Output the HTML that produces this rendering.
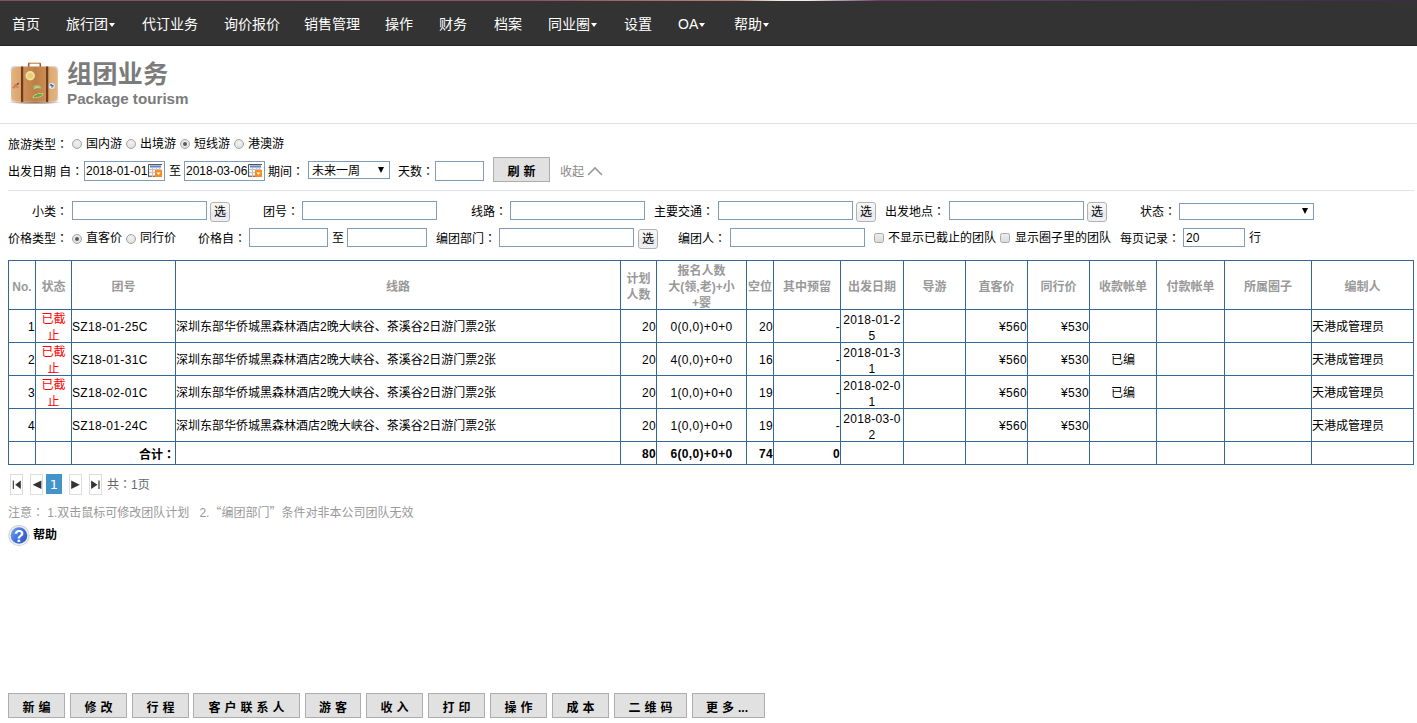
<!DOCTYPE html>
<html lang="zh-CN">
<head>
<meta charset="utf-8">
<title>组团业务</title>
<style>
*{box-sizing:border-box;}
html,body{margin:0;padding:0;background:#fff;}
body{width:1417px;height:723px;position:relative;overflow:hidden;font-family:"Liberation Sans","Noto Sans CJK SC",sans-serif;font-size:12px;line-height:16px;color:#000;}
.abs{position:absolute;white-space:nowrap;}
/* nav */
#topstrip{position:absolute;left:0;top:0;width:1417px;height:1px;background:linear-gradient(to right,#80505f 0,#8a5565 38%,#b58674 52%,#f4ece8 55%,#f4ece8 57%,#6d3d6c 62%,#3f294e 100%);}
#nav{position:absolute;left:0;top:1px;width:1417px;height:45px;background:#333;border-bottom:1px solid #252525;}
#nav a{position:absolute;top:1px;height:44px;line-height:45px;font-size:14px;color:#fff;text-decoration:none;white-space:nowrap;}
#nav .caret{display:inline-block;width:0;height:0;border-left:3.500px solid transparent;border-right:3.500px solid transparent;border-top:4px solid #fff;vertical-align:middle;margin-left:1px;position:relative;top:0px;}
/* header */
#h1{left:67px;top:59px;font-size:25.300px;line-height:30px;font-weight:bold;color:#7b7b7b;}
#h2{left:67px;top:90px;font-size:15.200px;line-height:18px;font-weight:bold;color:#7b7b7b;}
.hr{position:absolute;height:1px;background:#dde2e9;}
/* form */
.lbl{position:absolute;white-space:nowrap;font-size:12px;line-height:16px;height:16px;}
.inp{position:absolute;border:1px solid #7f9db9;background:#fff;font-size:12px;line-height:16px;padding:1px 2px;white-space:nowrap;overflow:hidden;}
.sel{position:absolute;border:1px solid #7f9db9;background:#fff;font-size:12px;line-height:16px;padding:1px 3px 0;white-space:nowrap;}
.sel i{position:absolute;right:5px;top:5px;width:0;height:0;border-left:3.200px solid transparent;border-right:3.200px solid transparent;border-top:6px solid #000;}
.pick{position:absolute;width:20px;height:20px;border:1px solid #b2b2b2;border-radius:3px;background:linear-gradient(#f7f7f7 0%,#f1f1f1 48%,#e6e9f0 52%,#eef0f4 100%);font-size:12px;line-height:19px;text-align:center;}
.radio{position:absolute;width:10px;height:10px;border-radius:50%;border:1px solid #a3a3a3;background:radial-gradient(circle at 50% 35%,#f3f3f3,#d9d9d9);}
.radio.on::after{content:"";position:absolute;left:2px;top:2px;width:4px;height:4px;border-radius:50%;background:#5a5a5a;}
.chk{position:absolute;width:10px;height:10px;border-radius:2.500px;border:1px solid #a6a6a6;background:linear-gradient(#ececec,#dcdcdc);}
.btn{position:absolute;overflow:hidden;border:1px solid #adadad;background:#e1e1e1;font-weight:bold;font-size:12px;text-align:center;white-space:nowrap;}
/* table */
#grid{position:absolute;left:8px;top:260px;width:1405px;border-collapse:collapse;table-layout:fixed;font-size:12px;line-height:16px;}
#grid td,#grid th{border:1px solid #336699;padding:0;font-weight:normal;position:relative;top:1px;}
#grid th{color:#999;font-weight:bold;text-align:center;height:49px;}
#grid td{height:33px;}
#grid tr.tot td{height:23px;font-weight:bold;}
.r{text-align:right;}.c{text-align:center;}
.red{color:#f00;}
.co{font-family:"Noto Sans CJK JP",sans-serif;}
.q{font-family:"Noto Sans CJK SC",sans-serif;}
.ls{letter-spacing:0.33px;}
.brk{word-break:break-all;}
.dn{position:relative;top:1px;}
#grid th,#grid td.brk{top:2px;}
.bb{top:693px;height:25px;line-height:29px;letter-spacing:4px;padding-left:4px;}
/* pager */
.pg{position:absolute;top:474px;width:13px;height:21px;border:1px solid #ddd;background:#fff;}
.pg svg{position:absolute;left:0;top:0;}
</style>
</head>
<body>
<div id="topstrip"></div>
<div id="nav">
<a style="left:12px">首页</a>
<a style="left:66px">旅行团<span class="caret"></span></a>
<a style="left:142px">代订业务</a>
<a style="left:224px">询价报价</a>
<a style="left:304px">销售管理</a>
<a style="left:385px">操作</a>
<a style="left:439px">财务</a>
<a style="left:494px">档案</a>
<a style="left:548px">同业圈<span class="caret"></span></a>
<a style="left:624px">设置</a>
<a style="left:678px">OA<span class="caret"></span></a>
<a style="left:734px">帮助<span class="caret"></span></a>
</div>

<!-- header -->
<svg class="abs" id="logo" style="left:6px;top:58px" width="58" height="50" viewBox="0 0 58 50">
<defs>
<linearGradient id="bg1" x1="0" x2="1" y1="0" y2="0">
<stop offset="0" stop-color="#e3b47f"/><stop offset="0.190" stop-color="#dba56d"/><stop offset="0.260" stop-color="#cd9058"/><stop offset="0.520" stop-color="#bf7d44"/><stop offset="0.780" stop-color="#cc8f56"/><stop offset="0.830" stop-color="#dcab74"/><stop offset="1" stop-color="#e2b682"/>
</linearGradient>
<linearGradient id="hg" x1="0" x2="1" y1="0" y2="0"><stop offset="0" stop-color="#8f5c30"/><stop offset="0.150" stop-color="#cf9860"/><stop offset="0.850" stop-color="#cf9860"/><stop offset="1" stop-color="#8f5c30"/></linearGradient>
<radialGradient id="shd" cx="0.5" cy="0.5" r="0.5"><stop offset="0" stop-color="#6b4226" stop-opacity="0.750"/><stop offset="0.700" stop-color="#8a6040" stop-opacity="0.450"/><stop offset="1" stop-color="#a08060" stop-opacity="0"/></radialGradient>
<filter id="soft" x="-5%" y="-5%" width="110%" height="110%"><feGaussianBlur stdDeviation="0.350"/></filter>
</defs>
<g filter="url(#soft)">
<ellipse cx="29" cy="44.600" rx="27" ry="1.500" fill="url(#shd)"/>
<path d="M22.700 9 v-2.600 a1.200 1.200 0 0 1 1.200 -1.200 h9.200 a1.200 1.200 0 0 1 1.200 1.200 V9" fill="none" stroke="url(#hg)" stroke-width="1.700"/>
<path d="M23 4.600 h11" stroke="#f3e6d2" stroke-width="0.700" fill="none"/>
<rect x="5.100" y="8.500" width="46.700" height="35.300" rx="4.200" fill="url(#bg1)"/>
<rect x="15" y="8.500" width="2.200" height="35.600" fill="#6e3a1a"/>
<rect x="40" y="8.500" width="2.200" height="35.600" fill="#6e3a1a"/>
<path d="M5.300 13.500 v-1.500 a3.300 3.300 0 0 1 3.300 -3.300 h1.800 M51.600 13.500 v-1.500 a3.300 3.300 0 0 0 -3.300 -3.300 h-1.800 M5.300 39.500 v1 a3.100 3.100 0 0 0 3.100 3.100 h1 M51.600 39.500 v1 a3.100 3.100 0 0 1 -3.100 3.100 h-1" fill="none" stroke="#d4d4d6" stroke-width="1.500"/>
<circle cx="24.200" cy="17.800" r="4.700" fill="#f1e2ae"/>
<circle cx="24.200" cy="17.800" r="3" fill="#e9cf72"/>
<path d="M6.800 30 L13 25 M8.300 26.400 l4 3.600 M7 28.500 l2 1.600" stroke="#d8736c" stroke-width="1.500" fill="none"/>
<path d="M10.800 26.600 l1.800 -1.400" stroke="#7d3434" stroke-width="1.200"/>
<circle cx="45.800" cy="27.900" r="2.900" fill="#e3ebf6"/>
<path d="M43.800 26.800 l4 1.400 M45.400 26 l0.800 3.600" stroke="#3f78c4" stroke-width="1.300"/>
<ellipse cx="32" cy="37.600" rx="5.600" ry="2.100" fill="#e2dfae" transform="rotate(-18 32 37.600)"/>
<ellipse cx="32" cy="37.600" rx="4.800" ry="1.500" fill="#62aa3c" transform="rotate(-18 32 37.600)"/>
<path d="M31.200 37 q0.600 -3.500 -0.300 -6.400" stroke="#b08a55" stroke-width="1.200" fill="none"/>
<path d="M26.800 31.600 q3.800 -5.400 8.800 -1 q-4.400 -1.600 -8.800 1z" fill="#b9dba0"/>
<path d="M27.400 29.400 q3.400 -3.200 7.400 0.200" stroke="#9acb84" stroke-width="1.700" fill="none"/>
</g>
</svg>
<div class="abs" id="h1">组团业务</div>
<div class="abs" id="h2">Package tourism</div>
<div class="hr" style="left:0;top:123px;width:1417px"></div>

<!-- form row 1 -->
<div class="lbl" style="left:8px;top:136px">旅游类型<span class="co" lang="ja">：</span></div>
<span class="radio" style="left:72px;top:139px"></span><div class="lbl" style="left:86px;top:136px">国内游</div>
<span class="radio" style="left:126px;top:139px"></span><div class="lbl" style="left:140px;top:136px">出境游</div>
<span class="radio on" style="left:180px;top:139px"></span><div class="lbl" style="left:194px;top:136px">短线游</div>
<span class="radio" style="left:234px;top:139px"></span><div class="lbl" style="left:248px;top:136px">港澳游</div>

<!-- form row 2 -->
<div class="lbl" style="left:8px;top:163px">出发日期 自<span class="co" lang="ja">：</span></div>
<div class="inp" style="left:84px;top:161px;width:81px;height:20px;padding-left:1px">2018-01-01</div>
<svg class="abs cal" style="left:148px;top:164px" width="14" height="13" viewBox="0 0 14 13"><rect x="0" y="0" width="14" height="13" fill="#f4f4f4"/><path d="M0.500 13V0.500H14" fill="none" stroke="#555" stroke-width="1"/><path d="M0.500 12.500H7" stroke="#777" stroke-width="1"/><rect x="2" y="1.500" width="11" height="2" fill="#5f84c9"/><path d="M1 5.500h12M1 8.500h7M1 11.500h6M4.500 4v9M8.500 4v3M11.500 4v2" stroke="#c4c4c4" stroke-width="1" fill="none"/><rect x="7" y="6" width="7" height="7" fill="#ff8b1e"/><path d="M8.500 8.500h4l-2 2.500z" fill="#fff"/></svg>
<div class="lbl" style="left:169px;top:163px">至</div>
<div class="inp" style="left:184px;top:161px;width:81px;height:20px;padding-left:1px">2018-03-06</div>
<svg class="abs cal" style="left:248px;top:164px" width="14" height="13" viewBox="0 0 14 13"><rect x="0" y="0" width="14" height="13" fill="#f4f4f4"/><path d="M0.500 13V0.500H14" fill="none" stroke="#555" stroke-width="1"/><path d="M0.500 12.500H7" stroke="#777" stroke-width="1"/><rect x="2" y="1.500" width="11" height="2" fill="#5f84c9"/><path d="M1 5.500h12M1 8.500h7M1 11.500h6M4.500 4v9M8.500 4v3M11.500 4v2" stroke="#c4c4c4" stroke-width="1" fill="none"/><rect x="7" y="6" width="7" height="7" fill="#ff8b1e"/><path d="M8.500 8.500h4l-2 2.500z" fill="#fff"/></svg>
<div class="lbl" style="left:268px;top:163px">期间<span class="co" lang="ja">：</span></div>
<div class="sel" style="left:308px;top:161px;width:82px;height:18px">未来一周<i></i></div>
<div class="lbl" style="left:398px;top:163px">天数<span class="co" lang="ja">：</span></div>
<div class="inp" style="left:435px;top:161px;width:49px;height:20px"></div>
<div class="btn" style="left:493px;top:157px;width:57px;height:25px;line-height:28px;letter-spacing:4px;padding-left:4px;overflow:hidden">刷新</div>
<div class="lbl" style="left:560px;top:164px;color:#888">收起</div>
<svg class="abs" style="left:586px;top:165px" width="18" height="12"><path d="M2 10 L9 3 L16 10" fill="none" stroke="#999" stroke-width="1.600"/></svg>
<div class="hr" style="left:8px;top:190px;width:1406px"></div>

<!-- form row 3 -->
<div class="lbl" style="left:32px;top:203px">小类<span class="co" lang="ja">：</span></div>
<div class="inp" style="left:72px;top:201px;width:135px;height:19px"></div>
<div class="pick" style="left:210px;top:202px">选</div>
<div class="lbl" style="left:263px;top:203px">团号<span class="co" lang="ja">：</span></div>
<div class="inp" style="left:302px;top:201px;width:135px;height:19px"></div>
<div class="lbl" style="left:471px;top:203px">线路<span class="co" lang="ja">：</span></div>
<div class="inp" style="left:510px;top:201px;width:135px;height:19px"></div>
<div class="lbl" style="left:654px;top:203px">主要交通<span class="co" lang="ja">：</span></div>
<div class="inp" style="left:718px;top:201px;width:135px;height:19px"></div>
<div class="pick" style="left:856px;top:202px">选</div>
<div class="lbl" style="left:885px;top:203px">出发地点<span class="co" lang="ja">：</span></div>
<div class="inp" style="left:949px;top:201px;width:135px;height:19px"></div>
<div class="pick" style="left:1087px;top:202px">选</div>
<div class="lbl" style="left:1140px;top:203px">状态<span class="co" lang="ja">：</span></div>
<div class="sel" style="left:1179px;top:203px;width:135px;height:17px"><i style="top:4px"></i></div>

<!-- form row 4 -->
<div class="lbl" style="left:8px;top:230px">价格类型<span class="co" lang="ja">：</span></div>
<span class="radio on" style="left:72px;top:234px"></span><div class="lbl" style="left:86px;top:230px">直客价</div>
<span class="radio" style="left:126px;top:234px"></span><div class="lbl" style="left:140px;top:230px">同行价</div>
<div class="lbl" style="left:198px;top:230px">价格自<span class="co" lang="ja">：</span></div>
<div class="inp" style="left:249px;top:228px;width:79px;height:19px"></div>
<div class="lbl" style="left:332px;top:230px">至</div>
<div class="inp" style="left:347px;top:228px;width:80px;height:19px"></div>
<div class="lbl" style="left:436px;top:230px">编团部门<span class="co" lang="ja">：</span></div>
<div class="inp" style="left:499px;top:228px;width:135px;height:19px"></div>
<div class="pick" style="left:638px;top:229px">选</div>
<div class="lbl" style="left:678px;top:230px">编团人<span class="co" lang="ja">：</span></div>
<div class="inp" style="left:730px;top:228px;width:135px;height:19px"></div>
<span class="chk" style="left:874px;top:233px"></span><div class="lbl" style="left:888px;top:230px">不显示已截止的团队</div>
<span class="chk" style="left:1000px;top:233px"></span><div class="lbl" style="left:1015px;top:230px">显示圈子里的团队</div>
<div class="lbl" style="left:1120px;top:230px">每页记录<span class="co" lang="ja">：</span></div>
<div class="inp" style="left:1183px;top:228px;width:62px;height:19px">20</div>
<div class="lbl" style="left:1249px;top:230px">行</div>

<!-- table -->
<table id="grid">
<colgroup>
<col style="width:27px"><col style="width:36px"><col style="width:104px"><col style="width:445px"><col style="width:36px"><col style="width:90px"><col style="width:27px"><col style="width:67px"><col style="width:63px"><col style="width:62px"><col style="width:62px"><col style="width:62px"><col style="width:67px"><col style="width:68px"><col style="width:87px"><col style="width:102px">
</colgroup>
<tr><th>No.</th><th>状态</th><th>团号</th><th>线路</th><th>计划<br>人数</th><th>报名人数<br>大(领,老)+小<br>+婴</th><th>空位</th><th>其中预留</th><th>出发日期</th><th>导游</th><th>直客价</th><th>同行价</th><th>收款帐单</th><th>付款帐单</th><th>所属圈子</th><th>编制人</th></tr>
<tr><td class="r ls">1</td><td class="c red">已截<br><span class="dn">止</span></td><td class="ls">SZ18-01-25C</td><td>深圳东部华侨城黑森林酒店2晚大峡谷、茶溪谷2日游门票2张</td><td class="r ls">20</td><td class="c ls">0(0,0)+0+0</td><td class="r ls">20</td><td class="r ls">-</td><td class="c brk ls">2018-01-25</td><td></td><td class="r ls">¥560</td><td class="r ls">¥530</td><td class="c"></td><td></td><td></td><td>天港成管理员</td></tr>
<tr><td class="r ls">2</td><td class="c red">已截<br><span class="dn">止</span></td><td class="ls">SZ18-01-31C</td><td>深圳东部华侨城黑森林酒店2晚大峡谷、茶溪谷2日游门票2张</td><td class="r ls">20</td><td class="c ls">4(0,0)+0+0</td><td class="r ls">16</td><td class="r ls">-</td><td class="c brk ls">2018-01-31</td><td></td><td class="r ls">¥560</td><td class="r ls">¥530</td><td class="c">已编</td><td></td><td></td><td>天港成管理员</td></tr>
<tr><td class="r ls">3</td><td class="c red">已截<br><span class="dn">止</span></td><td class="ls">SZ18-02-01C</td><td>深圳东部华侨城黑森林酒店2晚大峡谷、茶溪谷2日游门票2张</td><td class="r ls">20</td><td class="c ls">1(0,0)+0+0</td><td class="r ls">19</td><td class="r ls">-</td><td class="c brk ls">2018-02-01</td><td></td><td class="r ls">¥560</td><td class="r ls">¥530</td><td class="c">已编</td><td></td><td></td><td>天港成管理员</td></tr>
<tr><td class="r ls">4</td><td class="c red"></td><td class="ls">SZ18-01-24C</td><td>深圳东部华侨城黑森林酒店2晚大峡谷、茶溪谷2日游门票2张</td><td class="r ls">20</td><td class="c ls">1(0,0)+0+0</td><td class="r ls">19</td><td class="r ls">-</td><td class="c brk ls">2018-03-02</td><td></td><td class="r ls">¥560</td><td class="r ls">¥530</td><td class="c"></td><td></td><td></td><td>天港成管理员</td></tr>
<tr class="tot"><td></td><td></td><td class="r">合计<span class="co" lang="ja">：</span></td><td></td><td class="r ls">80</td><td class="c ls">6(0,0)+0+0</td><td class="r ls">74</td><td class="r ls">0</td><td></td><td></td><td></td><td></td><td></td><td></td><td></td><td></td></tr>
</table>

<!-- pager -->
<div class="pg" style="left:10px"><svg width="11" height="19"><path d="M2.300 5.400v8.500" stroke="#333" stroke-width="1.100" fill="none"/><path d="M9.800 5.400v8.500l-5.600-4.250z" fill="#333"/></svg></div>
<div class="pg" style="left:30px"><svg width="11" height="19"><path d="M10.400 5.400v8.500l-8.800-4.250z" fill="#333"/></svg></div>
<div class="abs" style="left:46px;top:474px;width:16px;height:20px;background:#4394cb;color:#fff;font-family:'DejaVu Sans',sans-serif;font-size:13px;line-height:21px;text-align:center">1</div>
<div class="pg" style="left:69px"><svg width="11" height="19"><path d="M1.200 5.400v8.500l8.600-4.250z" fill="#333"/></svg></div>
<div class="pg" style="left:89px"><svg width="11" height="19"><path d="M9 5.400v8.500" stroke="#333" stroke-width="1.200" fill="none"/><path d="M1.100 5.400v8.500l6.400-4.250z" fill="#333"/></svg></div>
<div class="abs" style="left:107px;top:476px;font-size:12px;line-height:16px;color:#666">共<span class="co" lang="ja">：</span>1页</div>

<div class="abs" style="left:8px;top:504px;color:#999">注意<span class="co" lang="ja">：</span> 1.双击鼠标可修改团队计划 &nbsp; 2.<span class="q">“</span>编团部门<span class="q">”</span>条件对非本公司团队无效</div>

<svg class="abs" style="left:7px;top:523px" width="24" height="25" viewBox="0 0 24 25">
<defs><linearGradient id="hgd" x1="0" y1="0.200" x2="1" y2="0.900"><stop offset="0" stop-color="#7099ec"/><stop offset="0.500" stop-color="#3f6fdb"/><stop offset="1" stop-color="#2c59c6"/></linearGradient></defs>
<circle cx="12" cy="12.500" r="10.600" fill="#c9ccd4"/>
<circle cx="12" cy="12.500" r="9.800" fill="#eeeeee"/>
<circle cx="12" cy="12.500" r="8.300" fill="url(#hgd)"/>
<text x="12" y="18.600" text-anchor="middle" font-family="Liberation Sans, sans-serif" font-weight="bold" font-size="16.500" fill="#fff">?</text>
</svg>
<div class="abs" style="left:33px;top:527px;font-weight:bold">帮助</div>

<!-- bottom buttons -->
<div class="btn bb" style="left:8px;width:57px">新编</div>
<div class="btn bb" style="left:70px;width:57px">修改</div>
<div class="btn bb" style="left:132px;width:57px">行程</div>
<div class="btn bb" style="left:193px;width:107px">客户联系人</div>
<div class="btn bb" style="left:305px;width:56px">游客</div>
<div class="btn bb" style="left:366px;width:57px">收入</div>
<div class="btn bb" style="left:428px;width:57px">打印</div>
<div class="btn bb" style="left:490px;width:57px">操作</div>
<div class="btn bb" style="left:552px;width:57px">成本</div>
<div class="btn bb" style="left:614px;width:73px">二维码</div>
<div class="btn bb" style="left:692px;width:73px;text-align:left;padding-left:13px">更多<span style="letter-spacing:0">...</span></div>
</body>
</html>
